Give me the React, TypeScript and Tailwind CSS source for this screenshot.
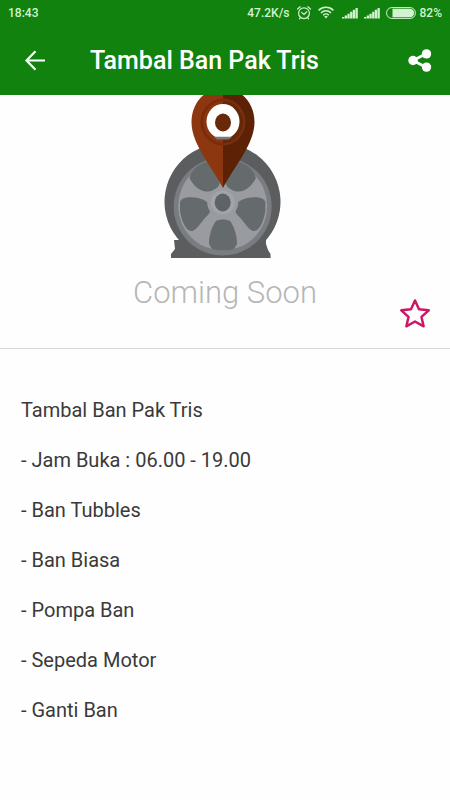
const details = [
  "Tambal Ban Pak Tris",
  "- Jam Buka : 06.00 - 19.00",
  "- Ban Tubbles",
  "- Ban Biasa",
  "- Pompa Ban",
  "- Sepeda Motor",
  "- Ganti Ban",
];

function AlarmIcon() {
  return (
    <svg className="h-4 w-4" viewBox="0 0 16 16" fill="none" stroke="currentColor" strokeWidth="1.2" strokeLinecap="round" aria-hidden="true">
      <circle cx="8" cy="8.2" r="5.4" />
      <path d="M1.600 4 4.200 1.800M14.400 4 11.800 1.800M5.600 7.400 8 9.400 10.800 6.800M4.200 12.800 3.400 13.800M11.800 12.800 12.600 13.800" />
    </svg>
  );
}

function WifiIcon() {
  return (
    <svg className="h-4 w-4" viewBox="0 0 16 16" fill="none" stroke="currentColor" strokeWidth="1.5" aria-hidden="true">
      <path d="M.6 5.400a10.400 10.400 0 0 1 14.800 0M3 7.900a7 7 0 0 1 10 0M5.200 10.200a4 4 0 0 1 5.600 0" />
      <path d="M8 13.400 6.200 11.600a2.600 2.600 0 0 1 3.600 0Z" fill="currentColor" stroke="none" />
    </svg>
  );
}

function SignalIcon() {
  return (
    <svg className="h-3 w-4" viewBox="0 0 16 12" fill="currentColor" aria-hidden="true">
      <path d="M0 10h2.300v1.500H0zM2.700 8.600H5v2.900H2.700zM5.400 6.800h2.300v4.700H5.400zM8.100 4.800h2.300v6.700H8.100zM10.800 2.800h2.300v8.700h-2.300zM13.500 1h2.300v10.500h-2.300z" />
    </svg>
  );
}

function BatteryIcon() {
  return (
    <svg className="h-3 w-[30px]" viewBox="0 0 30 12" aria-hidden="true">
      <rect x=".6" y=".6" width="28.8" height="10.8" rx="5.2" fill="none" stroke="currentColor" strokeWidth="1" />
      <path d="M6.500 1.800H24a4.200 4.200 0 0 1 0 8.400H6.500z" fill="currentColor" />
    </svg>
  );
}

function TireSideHoles() {
  return (
    <>
      <path d="M180 202c2-5 9-5 14-4.500 8 .5 15 4 16.500 10 1 4-2 7-6 11-5 6-8 11-12 12.500-7 1-11-11-12.500-20z" />
      <path d="M189.500 178c2-6 5-10 10-13 6-3.500 13-5 20-5v24c-2 5-7 7.500-13 7.500-7 0-14-7-17-13.500z" />
    </>
  );
}

function TireMarker() {
  return (
    <svg className="h-[164px] w-[124px]" viewBox="163 95 124 164" role="img" aria-label="Tire and location marker">
      <path d="M174 240h92v4l2 6 2.500 4v3.500H171v-3.500l4-5z" fill="#5b5d5f" />
      <path d="M191 250.500A58 58 0 1 1 254 250.500L248 257h-51z" fill="#5b5d5f" />
      <circle cx="222.700" cy="206.500" r="49" fill="#797c80" />
      <circle cx="222.700" cy="206" r="44.500" fill="#999ba1" />
      <path d="M171 256.500h99.500v1.500H171z" fill="#5b5d5f" />
      <g fill="#656b6d">
        <path d="M209 244c0-9 3-18 7-23 4-2 10-2 14 0 4 5 7 14 7 23l-3 5c-7 2-15 2-22 0z" />
        <TireSideHoles />
        <g transform="matrix(-1 0 0 1 445.400 0)">
          <TireSideHoles />
        </g>
      </g>
      <circle cx="222.700" cy="202.500" r="15.500" fill="#999ba1" />
      <circle cx="222.700" cy="202.500" r="12" fill="#a2a4a9" />
      <ellipse cx="222.700" cy="202.500" rx="8" ry="9" fill="#5e6365" />
      <path d="M223 88c-18 0-31.500 15-31.500 34 0 22 20 44 31.500 66z" fill="#8d3711" />
      <path d="M223 88c18 0 31.500 15 31.500 34 0 22-20 44-31.500 66z" fill="#5d2205" />
      <path d="M223 98.500a22.500 23.500 0 0 0 0 47z" fill="#7b2b0b" />
      <path d="M223 98.500a22.500 23.500 0 0 1 0 47z" fill="#75300e" />
      <path d="M223 101a20 21 0 0 0 0 42z" fill="#8a3410" />
      <path d="M223 101a20 21 0 0 1 0 42z" fill="#672608" />
      <ellipse cx="223" cy="121.500" rx="16.500" ry="17.500" fill="#fff" />
      <path d="M214 136.800h18l-3 2.700h-12z" fill="#76797b" />
      <ellipse cx="223" cy="122.500" rx="8" ry="9" fill="#692807" />
    </svg>
  );
}

export default function App() {
  return (
    <div className="min-h-screen bg-[#fefefe] font-[Roboto,sans-serif] text-[#3a3a3a]">
      <header className="bg-[#12820f] text-white">
        <div className="flex h-[26px] items-center justify-between px-2 text-[12px] font-medium text-[#d2f3cf]">
          <time>18:43</time>
          <div className="flex items-center">
            <span>47.2K/s</span>
            <span className="ml-1.5 flex items-center gap-1.5">
              <AlarmIcon />
              <WifiIcon />
            </span>
            <span className="mr-1 ml-2 flex items-center gap-1.5">
              <SignalIcon />
              <SignalIcon />
              <BatteryIcon />
            </span>
            <span>82%</span>
          </div>
        </div>
        <div className="flex h-[69px] items-center px-4">
          <button type="button" aria-label="Back" className="flex size-10 items-center justify-center">
            <svg className="size-6" viewBox="0 0 24 24" fill="none" stroke="currentColor" strokeWidth="2.2" aria-hidden="true">
              <path d="M21 11.500H3M11.500 2.300 2.500 11.500l9 9.200" />
            </svg>
          </button>
          <h1 className="ml-[34px] flex-1 text-[25px] leading-8 font-medium">Tambal Ban Pak Tris</h1>
          <button type="button" aria-label="Share" className="-mr-1.5 flex size-10 items-center justify-center">
            <svg className="size-6" viewBox="0 0 24 24" fill="currentColor" aria-hidden="true">
              <path d="M5 11.500 18.500 4.500M5 11.500l13.500 7" fill="none" stroke="currentColor" strokeWidth="2.600" />
              <circle cx="5" cy="11.500" r="4.700" />
              <circle cx="18.500" cy="4.900" r="4.700" />
              <circle cx="18.500" cy="18.100" r="4.700" />
            </svg>
          </button>
        </div>
      </header>

      <main>
        <section className="relative flex h-[254px] flex-col items-center border-b border-[#d6d6d6]">
          <TireMarker />
          <p className="mt-3.5 text-[31px] leading-10 font-light text-[#b6b6b6]">Coming Soon</p>
          <button type="button" aria-label="Add to favorites" className="absolute right-[15px] bottom-[14px] flex size-10 items-center justify-center">
            <svg className="size-8" viewBox="0 0 32 32" fill="none" stroke="#cc1765" strokeWidth="2.500" strokeLinejoin="round" aria-hidden="true">
              <path d="m16 2.500 4 8.800 9.700 1-7.200 6.600 2.100 9.400-8.600-4.800-8.600 4.800 2.100-9.400L2.300 12.300l9.700-1z" />
            </svg>
          </button>
        </section>

        <section className="flex flex-col gap-[26px] px-[21px] pt-[49px] text-[20px] leading-6">
          {details.map((line) => (
            <p key={line}>{line}</p>
          ))}
        </section>
      </main>
    </div>
  );
}
